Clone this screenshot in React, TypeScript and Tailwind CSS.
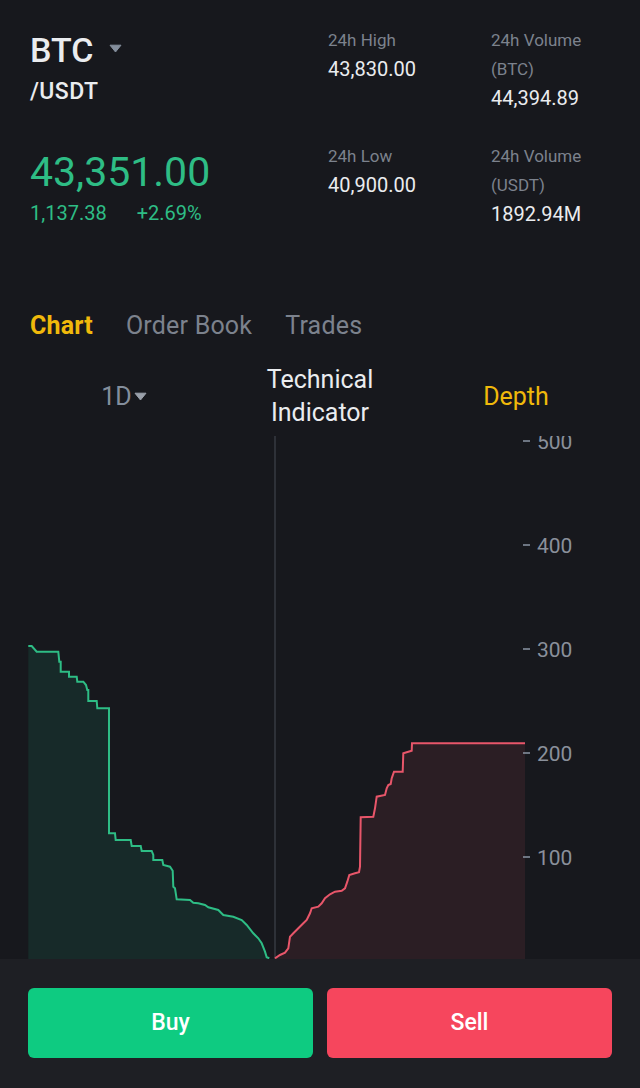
import React from 'react';

const bids: [number, number][] = [
  [28.3, 646], [31.7, 646], [36.7, 651.7], [58.3, 651.7], [59.3, 661.7], [60.7, 661.7], [60.7, 671.7],
  [69, 671.7], [69, 676.7], [76.7, 676.7], [77.3, 681.7], [83.3, 681.7], [86, 685], [87.3, 690],
  [88.3, 690], [88.3, 701], [96.7, 701], [97.3, 708.3], [109, 708.3], [109, 833.3], [115, 833.3],
  [115.7, 840], [130.7, 840], [131.7, 846], [140.7, 846], [141.7, 851], [151.7, 851], [153.3, 855],
  [153.3, 860], [162.3, 860], [163.3, 865], [170, 866.7], [172.7, 870.7], [173.3, 886.7], [175, 888.3],
  [176.7, 899.3], [190, 900], [193.3, 902.7], [198.3, 903.3], [205, 905], [208.3, 907.3], [218.3, 910],
  [223.3, 915], [233.3, 916.7], [241.7, 920], [246.7, 925], [253.3, 933.3], [258.3, 938.3],
  [261.7, 943.3], [265, 951.7], [266.7, 957.3], [269.3, 958.3],
];

const asks: [number, number][] = [
  [275, 958.3], [280, 955], [285, 952.7], [288.3, 948.3], [290, 936.7], [293.3, 933.3], [298.3, 928.3],
  [303.3, 923.3], [306.7, 920], [310, 913.3], [311.7, 908.3], [318.3, 906.7], [321.7, 903.3],
  [325, 898.3], [330, 894.3], [335, 891.7], [341.7, 890.7], [345, 888.3], [347.3, 881.7], [349.3, 875],
  [355, 873.3], [359, 872.3], [360, 866.7], [360.7, 817.3], [373.3, 816.7], [375, 808.3], [376.7, 796.7],
  [385, 795], [386.7, 788.3], [388.3, 785], [390.7, 784], [391.7, 778.3], [394, 771.7], [402.7, 771.7],
  [403.3, 753.3], [408.3, 751.7], [411.7, 750.7], [412, 743.3], [525, 743.3],
];

const pts = (p: [number, number][]) => p.map(([x, y]) => `${x},${y}`).join(' ');

const Caret = ({ className }: { className?: string }) => (
  <svg width="13" height="9" viewBox="0 0 13 9" className={className}>
    <path d="M1 1.2h11L6.5 8z" fill="currentColor" stroke="currentColor" strokeWidth="1" strokeLinejoin="round" />
  </svg>
);

const DepthChart = () => (
  <svg width="640" height="523" viewBox="0 436 640 523" className="block">
    <line x1="275" y1="436" x2="275" y2="959" stroke="#474b54" strokeWidth="1" />
    <polygon points={`${pts(bids)} 269.3,959 28.3,959`} fill="#172a29" />
    <polyline points={pts(bids)} fill="none" stroke="#2ebd85" strokeWidth="2" />
    <polygon points={`${pts(asks)} 525,959 275,959`} fill="#2b1e24" />
    <polyline points={pts(asks)} fill="none" stroke="#e8566a" strokeWidth="2" />
    {[500, 400, 300, 200, 100].map((v, i) => {
      const y = 441 + i * 104;
      return (
        <g key={v}>
          <line x1="523" y1={y} x2="530" y2={y} stroke="#848e9c" strokeWidth="1.6" />
          <text x="537" y={y + 7.5} fill="#8a909b" fontSize="21" fontFamily="Roboto, sans-serif">{v}</text>
        </g>
      );
    })}
  </svg>
);

export default function App() {
  return (
    <div className="w-[640px] h-[1088px] bg-[#17181d] flex flex-col overflow-hidden" style={{ fontFamily: 'Roboto, "Noto Sans", sans-serif' }}>
      <div className="px-[30px] pt-[26px]">
        <div className="flex">
          <div className="w-[298px]">
            <div className="flex items-center h-[48px]">
              <span className="text-[34px] leading-[48px] text-[#eaecef] font-medium">BTC</span>
              <Caret className="ml-[16px] mb-[4px] text-[#848e9c]" />
            </div>
            <div className="mt-[4px] text-[23px] leading-[28px] tracking-[0.4px] text-[#eaecef] font-medium">/USDT</div>
          </div>
          <div className="w-[163px] leading-[29px]">
            <div className="text-[17px] text-[#7c828d]">24h High</div>
            <div className="text-[20px] text-[#eaecef]">43,830.00</div>
          </div>
          <div className="flex-1 leading-[29px]">
            <div className="text-[17px] text-[#7c828d]">24h Volume</div>
            <div className="text-[17px] text-[#7c828d]">(BTC)</div>
            <div className="text-[20px] text-[#eaecef]">44,394.89</div>
          </div>
        </div>

        <div className="flex mt-[29px]">
          <div className="w-[298px]">
            <div className="mt-[6px] text-[41px] leading-[48px] text-[#2ebd85]">43,351.00</div>
            <div className="mt-[3px] flex gap-[30px] text-[20px] leading-[29px] text-[#2ebd85]">
              <span>1,137.38</span>
              <span>+2.69%</span>
            </div>
          </div>
          <div className="w-[163px] leading-[29px]">
            <div className="text-[17px] text-[#7c828d]">24h Low</div>
            <div className="text-[20px] text-[#eaecef]">40,900.00</div>
          </div>
          <div className="flex-1 leading-[29px]">
            <div className="text-[17px] text-[#7c828d]">24h Volume</div>
            <div className="text-[17px] text-[#7c828d]">(USDT)</div>
            <div className="text-[20px] text-[#eaecef]">1892.94M</div>
          </div>
        </div>

        <div className="mt-[81px] flex gap-[33px] text-[25px] leading-[32px] tracking-[0.2px]">
          <span className="font-bold text-[#f0b90b]">Chart</span>
          <span className="text-[#7c828d]">Order Book</span>
          <span className="text-[#7c828d]">Trades</span>
        </div>
      </div>

      <div className="mt-[21px] h-[73px] px-[26px] grid grid-cols-3 text-[25px] leading-[33px]">
        <div className="h-[66px] flex items-center justify-center text-[#848e9c]">
          <span>1D</span>
          <Caret className="ml-[2px] text-[#9aa0aa]" />
        </div>
        <div className="text-center text-[#eaecef]">
          <div>Technical</div>
          <div>Indicator</div>
        </div>
        <div className="h-[66px] flex items-center justify-center text-[#f0b90b]">Depth</div>
      </div>

      <div className="h-[523px] overflow-hidden">
        <DepthChart />
      </div>

      <div className="flex-1 bg-[#1e1f24] px-[28px] pt-[29px]">
        <div className="flex gap-[14px]">
          <button className="flex-1 h-[70px] rounded-[6px] bg-[#0ecb81] text-white text-[23px] font-medium">Buy</button>
          <button className="flex-1 h-[70px] rounded-[6px] bg-[#f6465d] text-white text-[23px] font-medium">Sell</button>
        </div>
      </div>
    </div>
  );
}
